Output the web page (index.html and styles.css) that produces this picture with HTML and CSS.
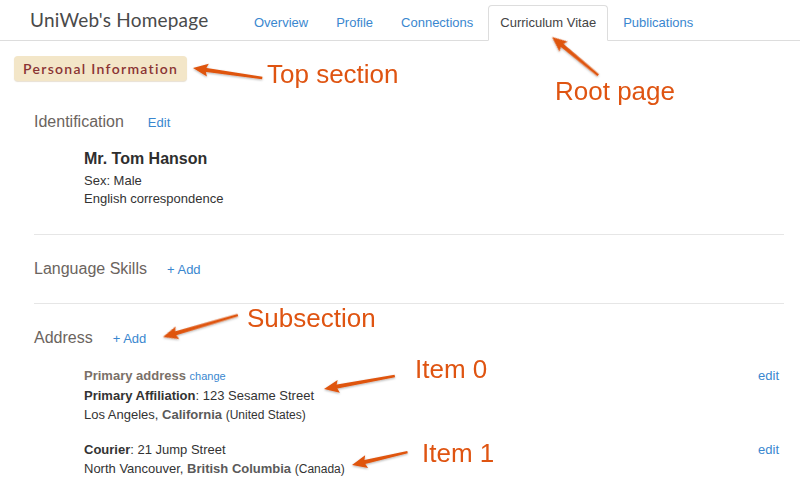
FILE: index.html
```html
<!DOCTYPE html>
<html>
<head>
<meta charset="utf-8">
<link rel="stylesheet" href="styles.css">
</head>
<body>
<header class="topbar">
  <div class="site-title">UniWeb's Homepage</div>
  <nav class="tabs">
    <a class="tab">Overview</a>
    <a class="tab">Profile</a>
    <a class="tab">Connections</a>
    <a class="tab active">Curriculum Vitae</a>
    <a class="tab">Publications</a>
  </nav>
</header>
<main class="page">
  <div class="badge">Personal Information</div>

  <section class="sub sub-first">
    <div class="sub-head"><h2>Identification</h2><a class="link edit-first">Edit</a></div>
    <div class="ident">
      <div class="name">Mr. Tom Hanson</div>
      <div class="line">Sex: Male</div>
      <div class="line">English correspondence</div>
    </div>
  </section>

  <section class="sub">
    <div class="sub-head"><h2>Language Skills</h2><a class="link">+ Add</a></div>
  </section>

  <section class="sub sub-last">
    <div class="sub-head"><h2>Address</h2><a class="link">+ Add</a></div>
    <div class="items">
      <div class="item">
        <div class="item-body">
          <div class="line"><b class="muted">Primary address</b> <a class="link small">change</a></div>
          <div class="line"><b>Primary Affiliation</b>: 123 Sesame Street</div>
          <div class="line">Los Angeles, <b class="grey">California</b> <span class="country">(United States)</span></div>
        </div>
        <a class="link edit">edit</a>
      </div>
      <div class="item">
        <div class="item-body">
          <div class="line"><b>Courier</b>: 21 Jump Street</div>
          <div class="line">North Vancouver, <b class="grey">British Columbia</b> <span class="country">(Canada)</span></div>
        </div>
        <a class="link edit">edit</a>
      </div>
    </div>
  </section>
</main>

<svg class="notes" width="800" height="492" viewBox="0 0 800 492">
  <defs>
    <filter id="sh" x="-20%" y="-50%" width="140%" height="200%">
      <feDropShadow dx="0" dy="1" stdDeviation="0.8" flood-color="#000" flood-opacity="0.3"/>
    </filter>
  </defs>
  <g class="arrow" filter="url(#sh)">
    <g transform="translate(193 68) rotate(8.2)"><polygon points="0,0 15,-6.5 12.5,0 15,6.5"/><polygon points="12,-2 70,-1.2 70,1.2 12,2"/></g>
    <g transform="translate(552 37) rotate(39.6)"><polygon points="0,0 15,-6.5 12.5,0 15,6.5"/><polygon points="12,-2 60,-1.2 60,1.2 12,2"/></g>
    <g transform="translate(163 337) rotate(-16.3)"><polygon points="0,0 15,-6.5 12.5,0 15,6.5"/><polygon points="12,-2 78,-1.2 78,1.2 12,2"/></g>
    <g transform="translate(324 389) rotate(-10.4)"><polygon points="0,0 15,-6.5 12.5,0 15,6.5"/><polygon points="12,-2 72,-1.2 72,1.2 12,2"/></g>
    <g transform="translate(352 465) rotate(-13.1)"><polygon points="0,0 15,-6.5 12.5,0 15,6.5"/><polygon points="12,-2 57,-1.2 57,1.2 12,2"/></g>
  </g>
  <text class="note" x="267" y="83">Top section</text>
  <text class="note" x="555" y="100">Root page</text>
  <text class="note" x="247" y="327">Subsection</text>
  <text class="note" x="415" y="378">Item 0</text>
  <text class="note" x="422" y="462">Item 1</text>
</svg>
</body>
</html>
```

FILE: styles.css
```css
* { box-sizing: border-box; }
html, body { margin: 0; padding: 0; background: #fff; }
body {
  width: 800px;
  height: 492px;
  overflow: hidden;
  position: relative;
  font-family: "Liberation Sans", Arial, sans-serif;
  color: #333;
}
a { text-decoration: none; cursor: pointer; }

.topbar {
  height: 41px;
  border-bottom: 1px solid #ddd;
  display: flex;
  align-items: flex-end;
}
.site-title {
  width: 241px;
  padding-left: 30px;
  align-self: flex-start;
  margin-top: 8px;
  font-family: "Lato", "Open Sans", sans-serif;
  font-size: 19px;
  line-height: 24px;
  color: #4a4a4a;
  letter-spacing: 0.2px;
}
.tabs {
  display: flex;
  margin-bottom: -1px;
}
.tab {
  display: block;
  padding: 8px 12px 9px;
  margin-right: 2px;
  font-size: 13px;
  line-height: 17px;
  color: #3a87cf;
  border: 1px solid transparent;
  border-radius: 4px 4px 0 0;
}
.tab.active {
  padding: 8px 11px 9px;
  color: #444;
  background: #fff;
  border-color: #ddd #ddd transparent #ddd;
}

.page {
  padding: 15px 16px 0 14px;
}
.badge {
  display: inline-block;
  height: 25px;
  padding: 0 9px;
  font-family: "Lato", "Open Sans", sans-serif;
  font-size: 14px;
  font-weight: 600;
  line-height: 25px;
  letter-spacing: 1.3px;
  color: #8a3434;
  background: #f3e6c8;
  border-radius: 4px;
  box-shadow: 0 1px 1px rgba(160, 130, 80, 0.25);
}

.sub {
  margin-left: 20px;
  padding: 24px 0 24px;
  border-bottom: 1px solid #e6e6e6;
}
.sub-first { padding-top: 31px; padding-bottom: 26px; }
.sub-last { border-bottom: none; }
.sub-head {
  display: flex;
  align-items: baseline;
  gap: 20px;
  height: 20px;
}
.sub-head h2 {
  margin: 0;
  font-size: 16px;
  line-height: 20px;
  font-weight: normal;
  color: #6b645e;
}
.edit-first { margin-left: 4px; }
.link { color: #3a87cf; font-size: 13px; }
.small { font-size: 11px; }

.ident {
  padding: 16px 0 0 50px;
  font-size: 13px;
}
.name {
  font-size: 16px;
  font-weight: bold;
  line-height: 22px;
  margin-bottom: 2px;
  color: #2e2e2e;
}
.line { line-height: 18px; font-size: 13px; }

.items {
  padding: 18px 5px 0 50px;
  display: flex;
  flex-direction: column;
  gap: 15px;
}
.item {
  display: flex;
  justify-content: space-between;
  align-items: flex-start;
}
.item .line { line-height: 19px; }
.item b { color: #333; }
.item b.muted { color: #7a7068; }
.item b.grey { color: #5a5a5a; }
.country { font-size: 12px; }
.edit { font-size: 13px; line-height: 19px; }

.notes {
  position: absolute;
  left: 0;
  top: 0;
  pointer-events: none;
}
.arrow polygon { fill: #df5411; }
.note {
  font-family: "Liberation Sans", Arial, sans-serif;
  font-size: 26px;
  fill: #df5411;
}
```
